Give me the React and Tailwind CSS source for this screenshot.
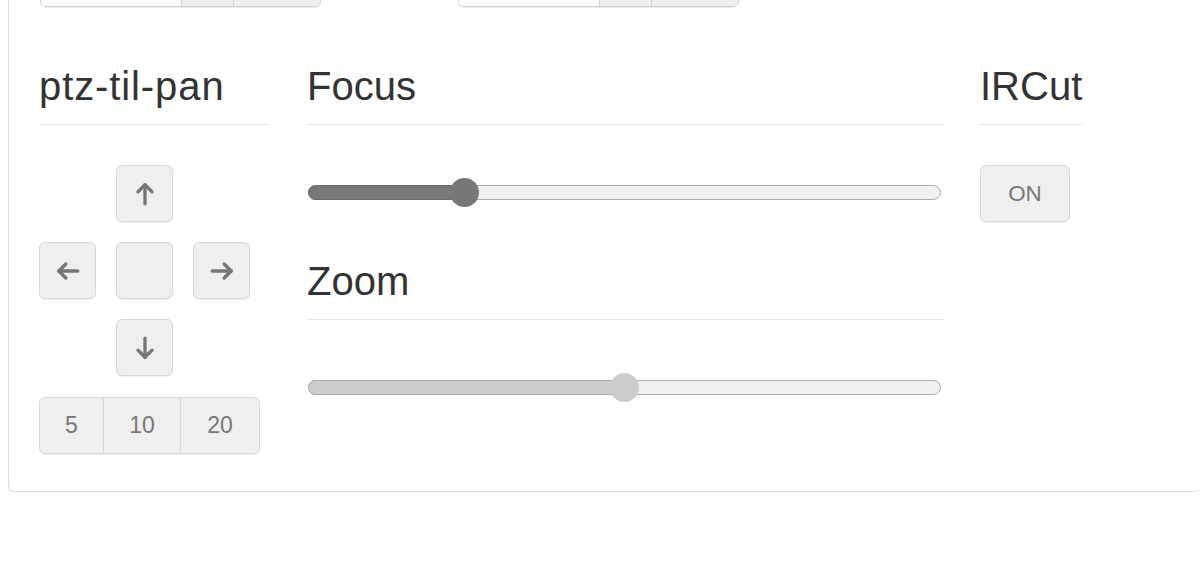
import React from 'react';

const font = "font-['Liberation_Sans',Arial,sans-serif]";

const Arrow = ({ dir }) => {
  const rot = { up: 0, right: 90, down: 180, left: 270 }[dir];
  return (
    <svg
      width="26"
      height="26"
      viewBox="0 0 24 24"
      fill="none"
      stroke="#767676"
      strokeWidth="3.1"
      strokeLinecap="round"
      strokeLinejoin="round"
      style={{ transform: `rotate(${rot}deg)` }}
    >
      <path d="M12 3.5V21" />
      <path d="M5.5 10 12 3.5 18.5 10" />
    </svg>
  );
};

const btn =
  'flex items-center justify-center bg-[#efefef] border border-[#d6d6d6] rounded-[6px] shadow-[0_1px_0_rgba(0,0,0,0.05)] text-[#777] text-[22.4px]';

const Heading = ({ children, wide }) => (
  <h3
    className={`text-[40px] leading-[44px] text-[#333] pb-[16px] border-b border-[#e6e6e6] ${
      wide ? 'tracking-[0.9px]' : ''
    }`}
  >
    {children}
  </h3>
);

const Slider = ({ value, dark }) => (
  <div className="relative h-[29px] flex items-center">
    <div className="relative w-full h-[15px] rounded-full border border-[#ababab] bg-[#f0f0f0]">
      <div
        className={`absolute -left-px -top-px h-[15px] rounded-l-full border ${
          dark ? 'bg-[#777] border-[#6a6a6a]' : 'bg-[#cccccc] border-[#aaaaaa]'
        }`}
        style={{ width: `${value}%` }}
      />
    </div>
    <div
      className={`absolute top-0 w-[29px] h-[29px] -ml-[14.5px] rounded-full ${
        dark ? 'bg-[#777]' : 'bg-[#cccccc]'
      }`}
      style={{ left: `${value}%` }}
    />
  </div>
);

const InputGroup = () => (
  <div className="flex h-[57px] rounded-[6px] border border-[#cfcfcf] shadow-[0_1px_1px_rgba(0,0,0,0.08)] overflow-hidden">
    <div className="w-[140px] bg-white" />
    <div className="w-[52px] bg-[#efefef] border-l border-[#d0d0d0]" />
    <div className="w-[87px] bg-[#efefef] border-l border-[#d0d0d0]" />
  </div>
);

export default function App() {
  return (
    <div className={`${font} bg-white min-h-[583px] overflow-hidden`}>
      <div className="ml-[8px] flex flex-col border-l border-b border-[#dcdcdc] rounded-b-[6px] pl-[30px] pb-[37px]">
        <div className="-mt-[50px] ml-px flex gap-[137px]">
          <InputGroup />
          <InputGroup />
        </div>

        <div className="mt-[57px] flex">
          <div className="w-[231px]">
            <Heading wide>ptz-til-pan</Heading>
            <div className="mt-[40px] grid grid-cols-[57px_57px_57px] gap-[20px]">
              <div />
              <button className={`${btn} h-[57px]`}>
                <Arrow dir="up" />
              </button>
              <div />
              <button className={`${btn} h-[57px]`}>
                <Arrow dir="left" />
              </button>
              <button className={`${btn} h-[57px]`} />
              <button className={`${btn} h-[57px]`}>
                <Arrow dir="right" />
              </button>
              <div />
              <button className={`${btn} h-[57px]`}>
                <Arrow dir="down" />
              </button>
            </div>
            <div className="mt-[21px] flex h-[57px] w-fit rounded-[6px] border border-[#d6d6d6] bg-[#efefef] shadow-[0_1px_0_rgba(0,0,0,0.05)] text-[#777] text-[23px]">
              <button className="w-[63px] flex items-center justify-center">5</button>
              <button className="w-[77px] flex items-center justify-center border-l border-[#d6d6d6]">10</button>
              <button className="w-[79px] flex items-center justify-center border-l border-[#d6d6d6]">20</button>
            </div>
          </div>

          <div className="ml-[37px] w-[636px]">
            <Heading>Focus</Heading>
            <div className="mt-[53px] pr-[2px] pl-px">
              <Slider value={24.7} dark />
            </div>
            <div className="mt-[52px]">
              <Heading>Zoom</Heading>
            </div>
            <div className="mt-[53px] pr-[2px] pl-px">
              <Slider value={50} />
            </div>
          </div>

          <div className="ml-[37px] w-fit">
            <Heading>IRCut</Heading>
            <button className={`${btn} mt-[40px] w-[90px] h-[57px]`}>ON</button>
          </div>
        </div>
      </div>
    </div>
  );
}
